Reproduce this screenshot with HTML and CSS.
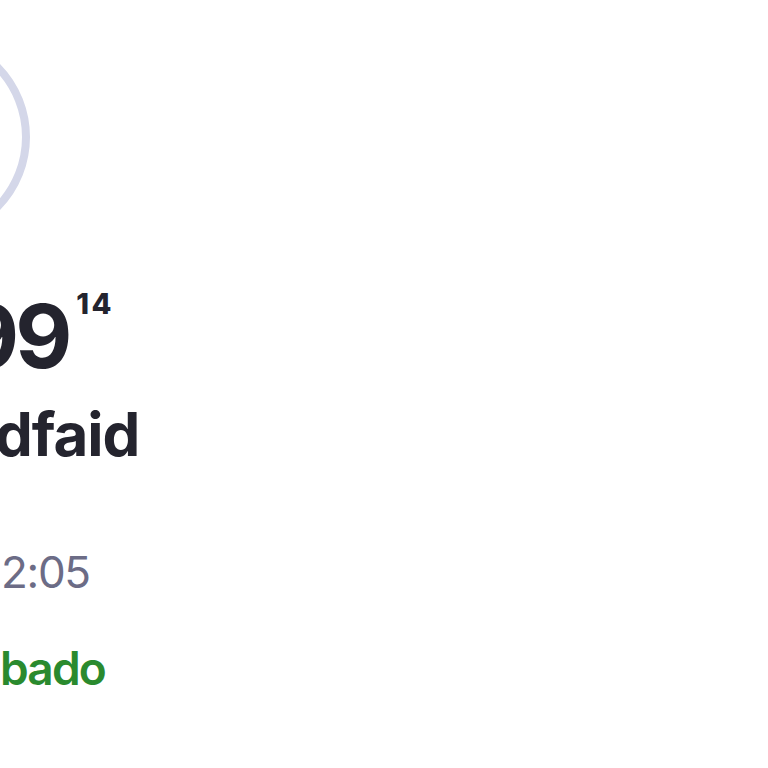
FILE: index.html
```html
<!DOCTYPE html>
<html lang="es">
<head>
<meta charset="utf-8">
<title>Detalle</title>
<link rel="stylesheet" href="styles.css">
</head>
<body>
<main class="detail">
  <div class="avatar-ring"></div>
  <div class="price"><span class="price-main">99</span><span class="price-cents">14</span></div>
  <div class="name">dfaid</div>
  <div class="time">2:05</div>
  <div class="day">bado</div>
</main>
</body>
</html>
```
FILE: styles.css
```css
html, body {
  margin: 0;
  padding: 0;
  background: #ffffff;
  width: 768px;
  height: 768px;
  overflow: hidden;
}

.detail {
  display: flex;
  flex-direction: column;
  align-items: flex-start;
  font-family: Inter, "Noto Sans", sans-serif;
}

.avatar-ring {
  width: 192px;
  height: 192px;
  border: 8px solid #d4d7e9;
  border-radius: 50%;
  margin-top: 33px;
  margin-left: -178px;
}

.price {
  display: flex;
  align-items: flex-start;
  margin-top: 51px;
  margin-left: -38px;
  color: #24242e;
  font-weight: 700;
}

.price-main {
  font-size: 88px;
  line-height: 1;
  letter-spacing: -4px;
}

.price-cents {
  font-size: 29px;
  line-height: 1;
  font-weight: 800;
  letter-spacing: 2.5px;
  margin-left: 8px;
  margin-top: -3px;
}

.name {
  margin-top: 24px;
  margin-left: -5px;
  font-size: 60px;
  line-height: 1;
  font-weight: 700;
  letter-spacing: -1px;
  color: #24242e;
}

.time {
  margin-top: 86px;
  margin-left: 1px;
  font-size: 44px;
  line-height: 1;
  font-weight: 400;
  letter-spacing: -1.3px;
  color: #6c6c86;
}

.day {
  margin-top: 51px;
  margin-left: 0;
  font-size: 46px;
  line-height: 1;
  font-weight: 600;
  letter-spacing: -1.8px;
  color: #2a8a2e;
}
```
